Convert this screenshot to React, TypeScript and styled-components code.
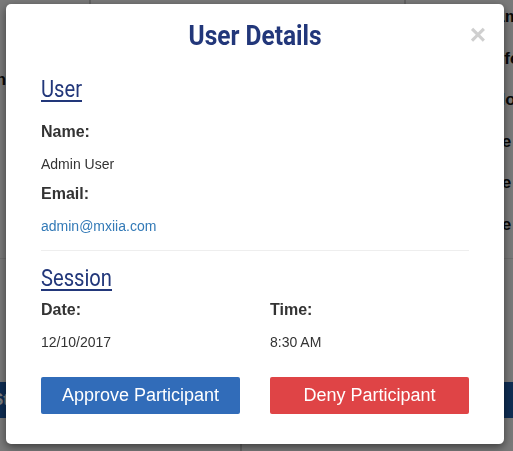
import React from "react";
import styled, { createGlobalStyle } from "styled-components";

const GlobalStyle = createGlobalStyle`
  html, body {
    margin: 0;
    padding: 0;
    background: #ffffff;
    font-family: "Liberation Sans", Arial, sans-serif;
  }
`;

const Page = styled.div`
  width: 513px;
  height: 451px;
  overflow: hidden;
  display: flex;
  flex-direction: column;
  background: #f2f2f2;
`;

const TopRow = styled.div`
  display: grid;
  grid-template-columns: 89px 315px 1fr;
  height: 258px;
  border-bottom: 1px solid #dcdcdc;
`;

const Cell = styled.div<{ $edge?: boolean }>`
  border-left: ${({ $edge }) => ($edge ? "2px solid #c8c8c8" : "none")};
  display: flex;
  flex-direction: column;
  gap: 21.6px;
  padding-top: 7px;
  font-size: 17px;
  font-weight: bold;
  color: #111;
  overflow: hidden;
  white-space: nowrap;
`;

const SideText = styled.div<{ $indent: number }>`
  padding-left: ${({ $indent }) => $indent}px;
  line-height: 20px;
`;

const Band = styled.div`
  margin-top: 123px;
  height: 36px;
  background: #1d5aa6;
  color: #fff;
  font-weight: bold;
  font-size: 17px;
  line-height: 36px;
  text-indent: -8px;
`;

const BottomRow = styled.div`
  display: grid;
  grid-template-columns: 240px 1fr;
  flex: 1;
  margin-top: 26px;
`;

const BottomCell = styled.div<{ $edge?: boolean }>`
  border-left: ${({ $edge }) => ($edge ? "2px solid #c8c8c8" : "none")};
`;

const Overlay = styled.div`
  position: fixed;
  inset: 0;
  background: rgba(0, 0, 0, 0.5);
`;

const Modal = styled.div`
  position: absolute;
  left: 6px;
  top: 4px;
  width: 498px;
  height: 440px;
  box-sizing: border-box;
  background: #fff;
  border-radius: 5px;
  box-shadow: 0 3px 9px rgba(0, 0, 0, 0.5);
  padding: 0 35px;
  display: flex;
  flex-direction: column;
`;

const Header = styled.div`
  display: flex;
  justify-content: center;
  align-items: center;
  height: 62px;
  margin-bottom: 9px;
  position: relative;
`;

const Title = styled.h2`
  margin: 0;
  font-family: "Roboto", sans-serif;
  font-weight: 700;
  font-size: 28px;
  color: #22377a;
  transform: scaleX(0.875);
`;

const Close = styled.span`
  position: absolute;
  right: -17px;
  top: 17px;
  font-family: "Liberation Sans", Arial, sans-serif;
  font-weight: bold;
  font-size: 28px;
  line-height: 28px;
  color: #cfcfcf;
`;

const SectionTitle = styled.h3`
  margin: 0;
  align-self: flex-start;
  font-family: "Roboto", sans-serif;
  font-weight: 400;
  font-size: 24px;
  line-height: 28px;
  color: #22377a;
  text-decoration: underline;
  text-decoration-thickness: 2px;
  text-underline-offset: 3px;
  transform: scaleX(0.84);
  transform-origin: left center;
`;

const Label = styled.div`
  font-weight: bold;
  font-size: 16px;
  line-height: 18px;
  color: #333;
`;

const Value = styled.div<{ $link?: boolean }>`
  font-size: 14px;
  line-height: 16px;
  color: ${({ $link }) => ($link ? "#337ab7" : "#333")};
`;

const Field = styled.div`
  display: flex;
  flex-direction: column;
  gap: 15px;
`;

const UserBlock = styled.div`
  display: flex;
  flex-direction: column;
  gap: 13px;
  padding-top: 20px;
`;

const Divider = styled.hr`
  border: none;
  border-top: 1px solid #eeeeee;
  margin: 16px 0 13px;
  width: 100%;
`;

const SessionGrid = styled.div`
  display: grid;
  grid-template-columns: 1fr 1fr;
  column-gap: 30px;
  margin-top: 9px;
`;

const Actions = styled.div`
  display: grid;
  grid-template-columns: 1fr 1fr;
  column-gap: 30px;
  margin-top: 27px;
`;

const Button = styled.button<{ $tone: "approve" | "deny" }>`
  height: 37px;
  border: none;
  border-radius: 2px;
  font-family: "Liberation Sans", Arial, sans-serif;
  font-size: 18px;
  color: #fff;
  background: ${({ $tone }) => ($tone === "approve" ? "#316cb9" : "#df4446")};
  cursor: pointer;
`;

export default function App() {
  return (
    <>
      <GlobalStyle />
      <Page>
        <TopRow>
          <Cell>
            <SideText $indent={0} style={{ marginTop: 63, marginLeft: -9 }}>
              Info
            </SideText>
          </Cell>
          <Cell $edge />
          <Cell $edge>
            <SideText $indent={77}>Nam</SideText>
            <SideText $indent={70}>Profe</SideText>
            <SideText $indent={85}>Mo</SideText>
            <SideText $indent={74}>Site c</SideText>
            <SideText $indent={74}>Site c</SideText>
            <SideText $indent={74}>Site c</SideText>
          </Cell>
        </TopRow>
        <Band>Status</Band>
        <BottomRow>
          <BottomCell />
          <BottomCell $edge />
        </BottomRow>
      </Page>
      <Overlay>
        <Modal>
          <Header>
            <Title>User Details</Title>
            <Close>×</Close>
          </Header>
          <SectionTitle>User</SectionTitle>
          <UserBlock>
            <Field>
              <Label>Name:</Label>
              <Value>Admin User</Value>
            </Field>
            <Field>
              <Label>Email:</Label>
              <Value $link>admin@mxiia.com</Value>
            </Field>
          </UserBlock>
          <Divider />
          <SectionTitle>Session</SectionTitle>
          <SessionGrid>
            <Field>
              <Label>Date:</Label>
              <Value>12/10/2017</Value>
            </Field>
            <Field>
              <Label>Time:</Label>
              <Value>8:30 AM</Value>
            </Field>
          </SessionGrid>
          <Actions>
            <Button $tone="approve">Approve Participant</Button>
            <Button $tone="deny">Deny Participant</Button>
          </Actions>
        </Modal>
      </Overlay>
    </>
  );
}
